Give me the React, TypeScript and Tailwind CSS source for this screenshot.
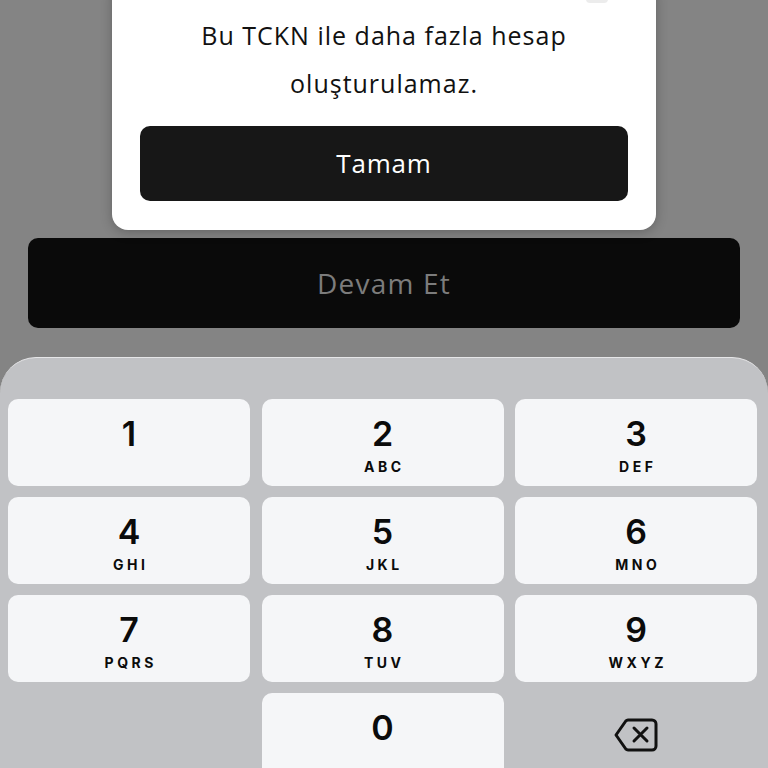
import React from 'react';

const keys = [
    { d: '1', l: '' },
    { d: '2', l: 'ABC' },
    { d: '3', l: 'DEF' },
    { d: '4', l: 'GHI' },
    { d: '5', l: 'JKL' },
    { d: '6', l: 'MNO' },
    { d: '7', l: 'PQRS' },
    { d: '8', l: 'TUV' },
    { d: '9', l: 'WXYZ' },
];

const BackspaceIcon = () => (
    <svg width="46" height="36" viewBox="0 0 46 36" fill="none" stroke="#111" strokeWidth="3" strokeLinejoin="round" strokeLinecap="round">
        <path d="M15 3h24a4 4 0 0 1 4 4v22a4 4 0 0 1-4 4H15a3 3 0 0 1-2.2-1L3 18l9.8-14a3 3 0 0 1 2.2-1z" />
        <path d="M21 11l13 13M34 11L21 24" />
    </svg>
);

const Key: React.FC<{ d: string; l: string }> = ({ d, l }) => (
    <button className="h-[87px] rounded-[10px] bg-[#f5f6f8] flex flex-col items-center pt-[17px] text-[#0b0b0b]" style={{ fontFamily: 'Inter, "Liberation Sans", sans-serif' }}>
        <span className="text-[34px] leading-[36px] font-semibold">{d}</span>
        {l && <span className="text-[14px] leading-[16px] font-bold tracking-[3.5px] mt-[7px] pl-[3.5px]">{l}</span>}
    </button>
);

export default function App() {
    return (
        <div className="w-[768px] h-[768px] overflow-hidden bg-[#848484] flex flex-col items-center" style={{ fontFamily: '"Open Sans", "Noto Sans", sans-serif' }}>
            {/* alert dialog, top is scrolled off */}
            <div className="relative shrink-0 w-[544px] -mt-[20px] bg-white rounded-[16px] shadow-[0_2px_12px_rgba(0,0,0,0.25)] pt-[31px] pb-[29px] px-[28px] flex flex-col items-center">
                <div className="absolute right-[48px] top-[10px] w-[22px] h-[13px] rounded-[4px] bg-[#ececec]" />
                <p className="text-[25px] leading-[48px] text-[#111] text-center tracking-[1px]">
                    Bu TCKN ile daha fazla hesap<br />oluşturulamaz.
                </p>
                <button className="mt-[19px] w-full h-[75px] rounded-[10px] bg-[#171717] text-white text-[26px] tracking-[0.8px]">
                    Tamam
                </button>
            </div>

            <button className="shrink-0 mt-[8px] w-[712px] h-[90px] rounded-[10px] bg-[#0a0a0a] text-[#7c7c7c] text-[28px] tracking-[1.2px]">
                Devam Et
            </button>

            {/* numeric keypad */}
            <div className="shrink-0 mt-[29px] w-full h-[420px] bg-[#c1c2c5] rounded-t-[36px] border-t border-[#e6e6e8] pt-[41px] px-[8px]">
                <div className="grid grid-cols-[242px_242px_242px] gap-x-[11.5px] gap-y-[11px]">
                    {keys.map(k => <Key key={k.d} d={k.d} l={k.l} />)}
                    <div />
                    <Key d="0" l="" />
                    <button className="h-[87px] flex items-start justify-center pt-[24px]">
                        <BackspaceIcon />
                    </button>
                </div>
            </div>
        </div>
    );
}
